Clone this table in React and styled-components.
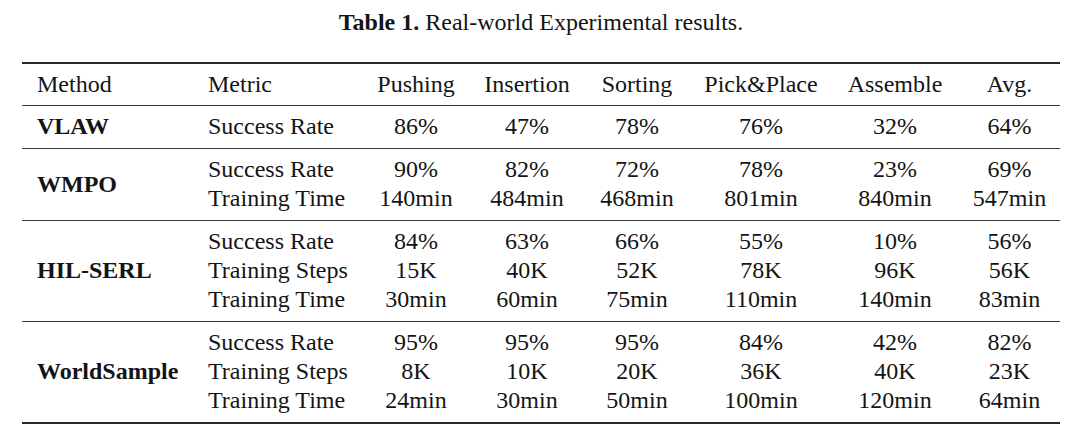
import styled, { createGlobalStyle } from "styled-components";

const GlobalStyle = createGlobalStyle`
  html, body {
    margin: 0;
    padding: 0;
    background: #ffffff;
  }
  body {
    font-family: "Liberation Serif", "Times New Roman", serif;
    color: #141414;
  }
`;

const COLS = "171px 168px 110px 112px 108px 140px 128px 101px";

const Page = styled.div`
  width: 1080px;
  height: 435px;
  padding-top: 8px;
  box-sizing: border-box;
  background: #fff;
`;

const Caption = styled.div`
  text-align: center;
  font-size: 24px;
  line-height: 29px;
  margin-bottom: 25px;
  padding-left: 2px;

  b {
    font-weight: 700;
  }
`;

const Table = styled.div`
  margin-left: 22px;
  width: 1038px;
  border-top: 2px solid #2a2a2a;
  border-bottom: 2px solid #2a2a2a;
`;

const Group = styled.div`
  display: grid;
  grid-template-columns: ${COLS};
  grid-auto-rows: 29px;
  padding: ${(p) => (p.$head ? "6px 0 6px" : "6px 0 7px")};
  border-bottom: ${(p) => (p.$last ? "none" : "1px solid #3a3a3a")};
  font-size: 24px;
  line-height: 29px;
`;

const MethodCell = styled.div`
  grid-column: 1;
  grid-row: ${(p) => `1 / span ${p.$span}`};
  align-self: center;
  padding-left: 15px;
  font-weight: ${(p) => (p.$bold ? 700 : 400)};
  white-space: nowrap;
`;

const MetricCell = styled.div`
  grid-column: 2;
  padding-left: 15px;
  white-space: nowrap;
`;

const Value = styled.div`
  text-align: center;
  white-space: nowrap;
`;

const header = ["Pushing", "Insertion", "Sorting", "Pick&Place", "Assemble", "Avg."];

const groups = [
  {
    method: "VLAW",
    rows: [["Success Rate", "86%", "47%", "78%", "76%", "32%", "64%"]],
  },
  {
    method: "WMPO",
    rows: [
      ["Success Rate", "90%", "82%", "72%", "78%", "23%", "69%"],
      ["Training Time", "140min", "484min", "468min", "801min", "840min", "547min"],
    ],
  },
  {
    method: "HIL-SERL",
    rows: [
      ["Success Rate", "84%", "63%", "66%", "55%", "10%", "56%"],
      ["Training Steps", "15K", "40K", "52K", "78K", "96K", "56K"],
      ["Training Time", "30min", "60min", "75min", "110min", "140min", "83min"],
    ],
  },
  {
    method: "WorldSample",
    rows: [
      ["Success Rate", "95%", "95%", "95%", "84%", "42%", "82%"],
      ["Training Steps", "8K", "10K", "20K", "36K", "40K", "23K"],
      ["Training Time", "24min", "30min", "50min", "100min", "120min", "64min"],
    ],
  },
];

export default function App() {
  return (
    <Page>
      <GlobalStyle />
      <Caption>
        <b>Table 1.</b> Real-world Experimental results.
      </Caption>
      <Table>
        <Group $head>
          <MethodCell $span={1}>Method</MethodCell>
          <MetricCell>Metric</MetricCell>
          {header.map((h) => (
            <Value key={h}>{h}</Value>
          ))}
        </Group>
        {groups.map((g, gi) => (
          <Group key={g.method} $last={gi === groups.length - 1}>
            <MethodCell $span={g.rows.length} $bold>
              {g.method}
            </MethodCell>
            {g.rows.map(([metric, ...vals]) => [
              <MetricCell key={metric}>{metric}</MetricCell>,
              ...vals.map((v, i) => <Value key={metric + i}>{v}</Value>),
            ])}
          </Group>
        ))}
      </Table>
    </Page>
  );
}
